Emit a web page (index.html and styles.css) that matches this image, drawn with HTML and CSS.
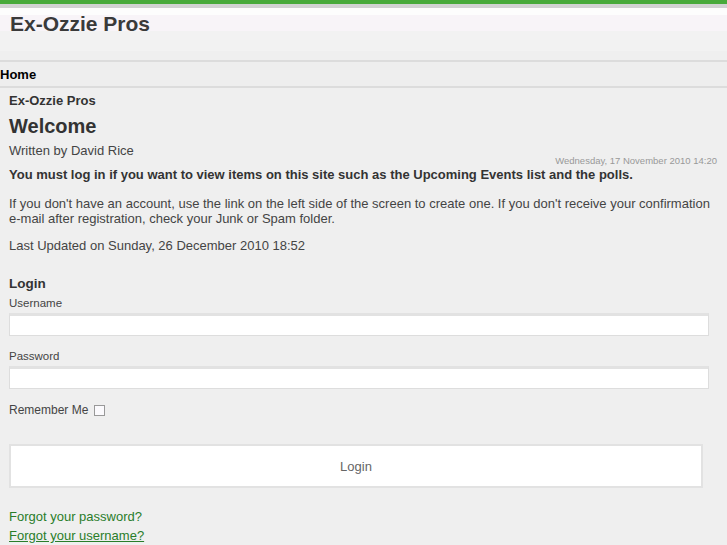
FILE: index.html
```html
<!DOCTYPE html>
<html>
<head>
<meta charset="utf-8">
<link rel="stylesheet" href="styles.css">
</head>
<body>
<div class="topbar"></div>
<div class="topline"></div>
<header class="header">
  <div class="band-white"></div>
  <div class="band-pink"><h1 class="site-title">Ex-Ozzie Pros</h1></div>
  <div class="band-grey"></div>
  <div class="band-grey2"></div>
</header>
<nav class="nav"><a class="nav-link" href="#">Home</a></nav>
<main class="content">
  <div class="section-title">Ex-Ozzie Pros</div>
  <h2 class="page-title">Welcome</h2>
  <div class="author">Written by David Rice</div>
  <div class="created">Wednesday, 17 November 2010 14:20</div>
  <p class="strong-line">You must log in if you want to view items on this site such as the Upcoming Events list and the polls.</p>
  <p class="para">If you don't have an account, use the link on the left side of the screen to create one. If you don't receive your confirmation e-mail after registration, check your Junk or Spam folder.</p>
  <p class="updated">Last Updated on Sunday, 26 December 2010 18:52</p>

  <form class="login">
    <div class="login-title">Login</div>
    <label class="field-label">Username</label>
    <input class="field" type="text">
    <label class="field-label pw">Password</label>
    <input class="field" type="password">
    <div class="remember">Remember Me <span class="checkbox"></span></div>
    <button class="btn" type="button">Login</button>
    <a class="link first" href="#">Forgot your password?</a>
    <a class="link underline" href="#">Forgot your username?</a>
  </form>
</main>
</body>
</html>
```

FILE: styles.css
```css
html, body {
  margin: 0;
  padding: 0;
  background: #efefef;
  font-family: "Liberation Sans", Arial, sans-serif;
  color: #333;
}
.topbar { height: 4px; background: #48aa3a; }
.topline { height: 4px; background: #d2d2d2; }
.header { display: flex; flex-direction: column; }
.band-white { height: 7px; background: #fdfdfd; }
.band-pink { height: 16px; background: #f8f4f8; position: relative; }
.band-grey { height: 20px; background: #f2f2f2; }
.band-grey2 { height: 9px; background: #efefef; border-bottom: 2px solid #dcdcdc; }
.site-title {
  position: absolute;
  left: 10px;
  top: -3px;
  margin: 0;
  font-size: 21px;
  font-weight: bold;
  color: #3a3a3a;
  line-height: 24px;
}
.nav {
  height: 24px;
  background: #eeeeee;
  border-bottom: 2px solid #dcdcdc;
  display: flex;
  align-items: center;
}
.nav-link {
  font-size: 13px;
  font-weight: bold;
  color: #000;
  text-decoration: none;
}
.content {
  padding: 5px 9px 0 9px;
}
.section-title {
  font-size: 13px;
  font-weight: bold;
  line-height: 16px;
  color: #333;
}
.page-title {
  margin: 5px 0 0 0;
  font-size: 20px;
  line-height: 24px;
  font-weight: bold;
  color: #333;
}
.author { margin-top: 5px; font-size: 13px; line-height: 16px; color: #444; }
.created {
  text-align: right;
  font-size: 9.5px;
  color: #999;
  line-height: 10px;
  margin-top: -3px;
  margin-right: 1px;
}
.strong-line {
  margin: 1px 0 0 0;
  font-size: 13px;
  font-weight: bold;
  line-height: 16px;
  color: #333;
}
.para {
  margin: 13px 0 0 0;
  font-size: 13px;
  line-height: 15px;
  color: #444;
}
.updated {
  margin: 12px 0 0 0;
  font-size: 13px;
  line-height: 15px;
  color: #444;
}
.login { display: flex; flex-direction: column; align-items: flex-start; margin-top: 23px; }
.login-title { font-size: 13.5px; font-weight: bold; line-height: 16px; color: #333; }
.field-label { font-size: 11.5px; line-height: 14px; color: #444; margin-top: 4px; }
.field-label.pw { margin-top: 13px; }
.field {
  box-sizing: border-box;
  width: 700px;
  height: 23px;
  margin: 3px 0 0 0;
  border: 1px solid #dddddd;
  border-top: 3px solid #e2e2e2;
  background: #ffffff;
  padding: 0 4px;
}
.remember {
  margin-top: 14px;
  font-size: 12px;
  line-height: 14px;
  color: #444;
  display: flex;
  align-items: center;
}
.checkbox {
  display: inline-block;
  box-sizing: border-box;
  width: 11px;
  height: 11px;
  border: 1px solid #999;
  background: #fbfafd;
  margin-left: 6px;
}
.btn {
  box-sizing: border-box;
  margin-top: 27px;
  width: 694px;
  height: 44px;
  background: #ffffff;
  border: 2px solid #e2e2e2;
  font-family: "Liberation Sans", Arial, sans-serif;
  font-size: 13px;
  color: #666;
  padding: 0;
}
.link {
  font-size: 13px;
  line-height: 19px;
  color: #2a7d2a;
  text-decoration: none;
}
.link.first { margin-top: 19px; }
.link.underline { text-decoration: underline; }
```
